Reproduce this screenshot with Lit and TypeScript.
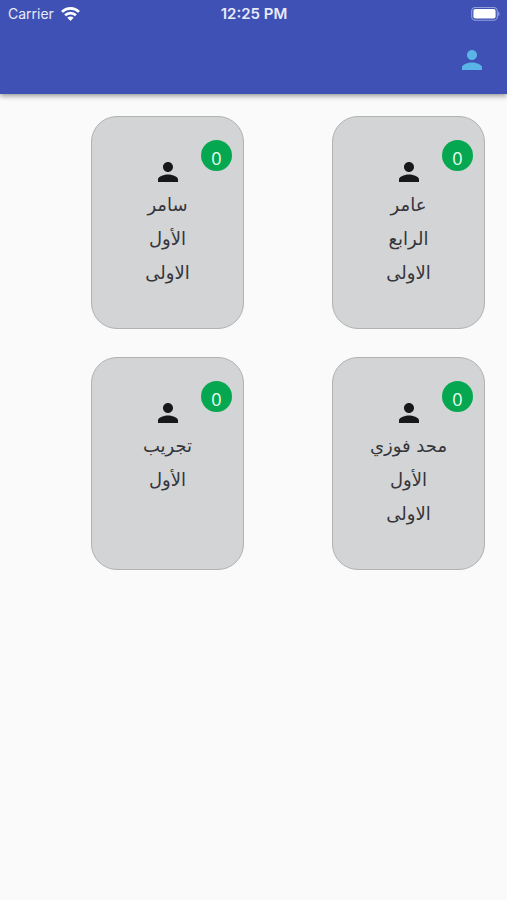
import { LitElement, html, css, svg } from "lit";
import { customElement, property } from "lit/decorators.js";

interface Student {
  name: string;
  details: string[];
  count: number;
}

const STUDENTS: Student[] = [
  { name: "عامر", details: ["الرابع", "الاولى"], count: 0 },
  { name: "سامر", details: ["الأول", "الاولى"], count: 0 },
  { name: "محد فوزي", details: ["الأول", "الاولى"], count: 0 },
  { name: "تجريب", details: ["الأول"], count: 0 },
];

const personPath = svg`<path d="M12 12c2.21 0 4-1.79 4-4s-1.79-4-4-4-4 1.79-4 4 1.79 4 4 4zm0 2c-2.67 0-8 1.34-8 4v2h16v-2c0-2.66-5.33-4-8-4z"/>`;

@customElement("status-bar")
export class StatusBar extends LitElement {
  static styles = css`
    :host {
      display: grid;
      grid-template-columns: 1fr auto 1fr;
      align-items: center;
      height: 28px;
      padding: 0 7px 0 8px;
      color: #e8eaf8;
      font: 14px/28px Inter, "Liberation Sans", sans-serif;
    }
    .carrier {
      display: flex;
      align-items: center;
      gap: 7px;
    }
    .time {
      font-size: 15px;
      font-weight: 600;
    }
    .battery {
      justify-self: end;
    }
    svg {
      display: block;
    }
  `;

  render() {
    return html`
      <div class="carrier">
        <span>Carrier</span>
        <svg width="19" height="14" viewBox="0 0 19 14" fill="none" stroke="#fff" stroke-width="2.7" aria-hidden="true">
          <path d="M1 4.9a12.2 12.2 0 0 1 17 0" />
          <path d="M4.1 8.2a7.8 7.8 0 0 1 10.8 0" />
          <path d="M9.5 14 6.4 10.8a4.4 4.4 0 0 1 6.2 0z" fill="#fff" stroke="none" />
        </svg>
      </div>
      <span class="time">12:25 PM</span>
      <svg class="battery" width="29" height="14" viewBox="0 0 29 14" aria-hidden="true">
        <rect x="0.7" y="0.4" width="25.6" height="12.8" rx="3.8" fill="none" stroke="#949edb" stroke-width="1.1" />
        <rect x="2.4" y="2.1" width="22.2" height="9.4" rx="2" fill="#fff" />
        <path d="M27.2 4.6c1.8.7 1.8 3.9 0 4.6z" fill="#949edb" />
      </svg>
    `;
  }
}

@customElement("student-card")
export class StudentCard extends LitElement {
  @property({ attribute: false }) student!: Student;

  static styles = css`
    :host {
      display: block;
    }
    .card {
      position: relative;
      box-sizing: border-box;
      min-height: 213px;
      padding: 40px 8px 32px;
      border: 1px solid #b0b3b2;
      border-radius: 26px;
      background: #d2d4d5;
      color: #35353a;
      text-align: center;
      font: 18px/34px "DejaVu Sans", sans-serif;
    }
    .person {
      display: block;
      width: 30px;
      height: 30px;
      margin: 0 auto 1px;
      fill: #17181a;
    }
    .name,
    .detail {
      margin: 0;
      font-size: inherit;
      font-weight: 400;
    }
    .badge {
      position: absolute;
      top: 23px;
      right: 11px;
      box-sizing: border-box;
      width: 31px;
      height: 31px;
      padding-top: 4px;
      border-radius: 50%;
      background: #05a851;
      color: #eafff2;
      font: 18px/28px "Open Sans", sans-serif;
    }
  `;

  render() {
    const { name, details, count } = this.student;
    return html`
      <article class="card">
        <span class="badge">${count}</span>
        <svg class="person" viewBox="0 0 24 24" aria-hidden="true">${personPath}</svg>
        <h2 class="name">${name}</h2>
        ${details.map((d) => html`<p class="detail">${d}</p>`)}
      </article>
    `;
  }
}

@customElement("app-root")
export class AppRoot extends LitElement {
  static styles = css`
    :host {
      display: block;
      min-height: 100vh;
      background: #fafafa;
    }
    .header {
      position: relative;
      background: #3f51b5;
      box-shadow: 0 2px 5px rgba(0, 0, 0, 0.4);
    }
    .toolbar {
      display: flex;
      justify-content: flex-end;
      box-sizing: border-box;
      padding: 17px 20px 19px;
    }
    .account {
      width: 30px;
      height: 30px;
      padding: 0;
      border: 0;
      background: none;
      cursor: pointer;
    }
    .account svg {
      display: block;
      fill: #5ab4e8;
    }
    .grid {
      display: grid;
      grid-template-columns: 1fr 1fr;
      gap: 28px 88px;
      padding: 22px 22px 22px 91px;
    }
  `;

  render() {
    return html`
      <header class="header">
        <status-bar></status-bar>
        <div class="toolbar">
          <button class="account" aria-label="الحساب">
            <svg width="30" height="30" viewBox="0 0 24 24" aria-hidden="true">${personPath}</svg>
          </button>
        </div>
      </header>
      <main class="grid" dir="rtl">
        ${STUDENTS.map((s) => html`<student-card .student=${s}></student-card>`)}
      </main>
    `;
  }
}
